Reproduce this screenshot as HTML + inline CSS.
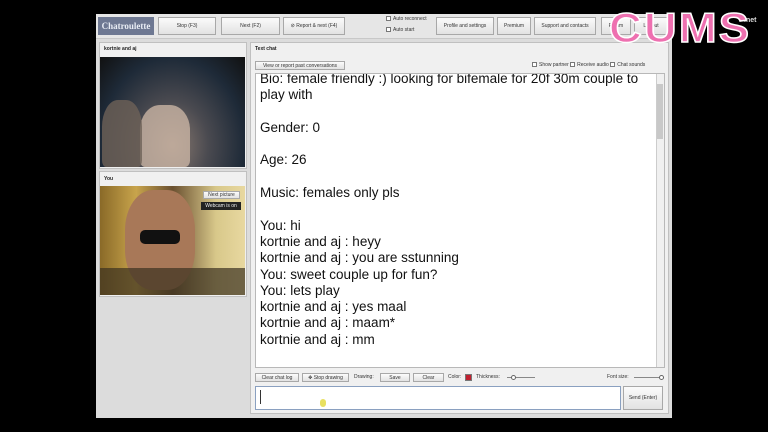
<!DOCTYPE html>
<html><head><meta charset="utf-8"><style>
*{box-sizing:border-box;margin:0;padding:0}
body{width:768px;height:432px;background:#000;position:relative;overflow:hidden;font-family:"Liberation Sans",sans-serif}
.a{position:absolute}
.win{left:96px;top:14px;width:576px;height:404px;background:#dcdcdc}
.bar{left:96px;top:14px;width:576px;height:25px;background:#e6e6e6;border-bottom:1px solid #c8c8c8}
.btn{position:absolute;background:linear-gradient(#fbfbfb,#e2e2e2);border:1px solid #a8a8a8;font-size:5px;color:#333;text-align:center;line-height:16px;height:18px}
.s{font-size:5px;color:#333}
.panel{position:absolute;background:#f0f0f0;border:1px solid #c0c0c0}
.ph{position:absolute;font-size:5px;font-weight:bold;color:#222}
.chat{font-size:13.5px;color:#111;line-height:16.3px;white-space:pre}
.cb{display:inline-block;width:5px;height:5px;border:1px solid #777;background:#fff;vertical-align:middle;margin-right:2px}
</style></head><body>
<div class="a win"></div>
<div class="a bar"></div>
<div class="a" style="left:98px;top:17px;width:56px;height:18px;background:#6e7892;color:#e8ecf4;font-family:'Liberation Serif',serif;font-size:9px;font-weight:bold;line-height:18px;text-align:center">Chatroulette</div>
<div class="btn" style="left:158px;top:17px;width:58px">Stop (F3)</div>
<div class="btn" style="left:221px;top:17px;width:59px">Next (F2)</div>
<div class="btn" style="left:283px;top:17px;width:62px">⊘ Report &amp; next (F4)</div>
<div class="a s" style="left:386px;top:16px"><span class="cb"></span>Auto reconnect</div>
<div class="a s" style="left:386px;top:27px"><span class="cb"></span>Auto start</div>
<div class="btn" style="left:436px;top:17px;width:58px">Profile and settings</div>
<div class="btn" style="left:497px;top:17px;width:34px">Premium</div>
<div class="btn" style="left:534px;top:17px;width:62px">Support and contacts</div>
<div class="btn" style="left:601px;top:17px;width:30px">Forum</div>
<div class="btn" style="left:634px;top:17px;width:34px">Logout</div>

<div class="panel" style="left:99px;top:42px;width:148px;height:127px"></div>
<div class="ph" style="left:104px;top:46px">kortnie and aj</div>
<div class="a" style="left:100px;top:57px;width:145px;height:110px;background:radial-gradient(ellipse at 50% 80%,#8a7a70 0%,#4a4a50 35%,#1e2a38 70%,#111 100%)"></div>
<div class="a" style="left:140px;top:105px;width:50px;height:62px;border-radius:40% 40% 10% 10%;background:#c9b4a4;opacity:.8"></div>
<div class="a" style="left:102px;top:100px;width:40px;height:67px;border-radius:40% 40% 10% 10%;background:#6e6258;opacity:.8"></div>
<div class="panel" style="left:99px;top:171px;width:148px;height:126px"></div>
<div class="ph" style="left:104px;top:176px">You</div>
<div class="a" style="left:100px;top:186px;width:145px;height:109px;background:linear-gradient(90deg,#8a6a28,#c8a44c 25%,#6a5030 50%,#d8c88a 80%,#e8d8a0)"></div>
<div class="a" style="left:125px;top:190px;width:70px;height:100px;border-radius:40%;background:#a87858"></div>
<div class="a" style="left:140px;top:230px;width:40px;height:14px;background:#111;border-radius:5px"></div>
<div class="a" style="left:100px;top:268px;width:145px;height:27px;background:#3a3020;opacity:.7"></div>
<div class="btn" style="left:203px;top:191px;width:37px;height:8px;line-height:7px;font-size:5px">Next picture</div>
<div class="a" style="left:201px;top:202px;width:40px;height:8px;background:#222;color:#eee;font-size:5px;line-height:8px;text-align:center">Webcam is on</div>

<div class="panel" style="left:250px;top:42px;width:419px;height:372px"></div>
<div class="ph" style="left:255px;top:46px">Text chat</div>
<div class="btn" style="left:255px;top:61px;width:90px;height:9px;line-height:8px">View or report past conversations</div>
<div class="a s" style="left:532px;top:62px"><span class="cb"></span>Show partner <span class="cb"></span>Receive audio <span class="cb"></span>Chat sounds</div>
<div class="a" style="left:255px;top:73px;width:410px;height:295px;background:#fff;border:1px solid #b8b8b8;overflow:hidden">
<div class="chat a" style="left:4px;top:-3px">Bio: female friendly :) looking for bifemale for 20f 30m couple to
play with

Gender: 0

Age: 26

Music: females only pls

You: hi
kortnie and aj : heyy
kortnie and aj : you are sstunning
You: sweet couple up for fun?
You: lets play
kortnie and aj : yes maal
kortnie and aj : maam*
kortnie and aj : mm</div>
<div class="a" style="right:0;top:0;width:8px;height:293px;background:#f0f0f0;border-left:1px solid #ccc"></div>
<div class="a" style="right:1px;top:10px;width:6px;height:55px;background:#c8c8c8"></div>
</div>
<div class="btn" style="left:255px;top:373px;width:44px;height:9px;line-height:8px">Clear chat log</div>
<div class="btn" style="left:302px;top:373px;width:47px;height:9px;line-height:8px">✥ Stop drawing</div>
<div class="a s" style="left:354px;top:374px">Drawing:</div>
<div class="btn" style="left:380px;top:373px;width:30px;height:9px;line-height:8px">Save</div>
<div class="btn" style="left:413px;top:373px;width:31px;height:9px;line-height:8px">Clear</div>
<div class="a s" style="left:448px;top:374px">Color:</div>
<div class="a" style="left:465px;top:374px;width:7px;height:7px;background:#c02030;border:1px solid #777"></div>
<div class="a s" style="left:476px;top:374px">Thickness:</div>
<div class="a" style="left:507px;top:377px;width:28px;height:1px;background:#888"></div>
<div class="a" style="left:511px;top:375px;width:5px;height:5px;border:1px solid #666;border-radius:50%;background:#fff"></div>
<div class="a s" style="left:607px;top:374px">Font size:</div>
<div class="a" style="left:634px;top:377px;width:30px;height:1px;background:#888"></div>
<div class="a" style="left:659px;top:375px;width:5px;height:5px;border:1px solid #666;border-radius:50%;background:#fff"></div>
<div class="a" style="left:255px;top:386px;width:366px;height:24px;background:#fff;border:1px solid #8aa0c0"></div>
<div class="a" style="left:260px;top:390px;width:1px;height:14px;background:#333"></div>
<div class="a" style="left:320px;top:399px;width:6px;height:8px;background:#e8e060;border-radius:3px"></div>
<div class="btn" style="left:623px;top:386px;width:40px;height:24px;line-height:22px">Send (Enter)</div>

<div class="a" style="left:609px;top:5px;font-family:'Liberation Sans',sans-serif;font-weight:900;font-size:42px;color:#ee70b0;letter-spacing:2px;line-height:46px;transform:scaleX(1.08);transform-origin:left;-webkit-text-stroke:1.5px #fff">CUMS</div>
<div class="a" style="left:744px;top:17px;font-size:7px;color:#ddd;font-weight:bold">.net</div>
</body></html>
